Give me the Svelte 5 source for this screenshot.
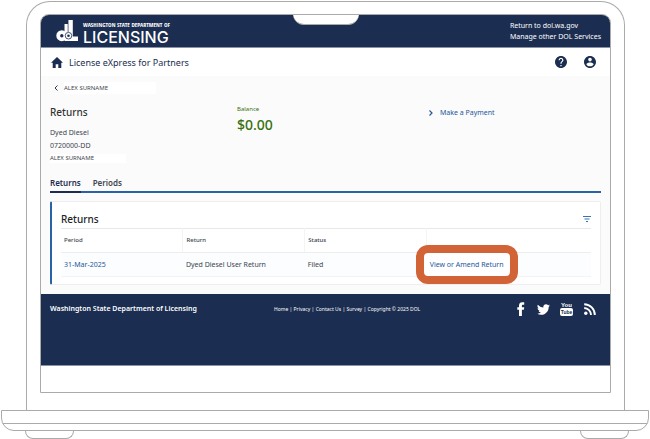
<script>
  const account = ['Dyed Diesel', '0720000-DD'];
  const rows = [{ period: '31-Mar-2025', name: 'Dyed Diesel User Return', status: 'Filed' }];
  const links = ['Home', 'Privacy', 'Contact Us', 'Survey'];
</script>

<div class="laptop">
  <div class="lid">
    <div class="screen">
      <div class="notch"></div>
      <header>
        <a class="brand" href="#home" aria-label="Washington State Department of Licensing">
          <svg width="23" height="22" viewBox="0 0 23 22" aria-hidden="true">
            <path fill="#fff" d="M8.500 4H12v17H8.500zM12 0h4.800v16.500H22V21H12z" />
            <circle cx="5.800" cy="15.700" r="3.600" fill="none" stroke="#fff" stroke-width="3.800" />
            <path d="M12.100 0v12" stroke="#1b2d50" stroke-width=".7" />
            <circle cx="12.500" cy="15.700" r="3.300" fill="#fff" stroke="#1b2d50" stroke-width=".8" />
            <circle cx="12.500" cy="15.700" r="1.300" fill="#1b2d50" />
          </svg>
          <span class="wordmark"><small>WASHINGTON STATE DEPARTMENT OF</small><b>LICENSING</b></span>
        </a>
        <nav class="top-links">
          <a href="#dol">Return to dol.wa.gov</a>
          <a href="#services">Manage other DOL Services</a>
        </nav>
      </header>

      <div class="appbar">
        <a class="home" href="#start">
          <svg width="12" height="11" viewBox="0 0 12 11" aria-hidden="true"><path fill="#1b2d50" d="M6 0 0 5.8h1.7V11h3V7.3h2.6V11h3V5.8H12z" /></svg>
          License eXpress for Partners
        </a>
        <div class="tools">
          <button aria-label="Help">
            <svg width="12" height="12" viewBox="2 2 20 20"><path fill="#1b2d50" d="M12 2C6.48 2 2 6.48 2 12s4.48 10 10 10 10-4.48 10-10S17.52 2 12 2zm1 17h-2v-2h2v2zm2.070-7.750-.9.920C13.450 12.900 13 13.500 13 15h-2v-.5c0-1.100.450-2.100 1.170-2.830l1.240-1.260c.370-.360.590-.860.590-1.410 0-1.100-.9-2-2-2s-2 .9-2 2H8c0-2.210 1.790-4 4-4s4 1.790 4 4c0 .880-.360 1.680-.930 2.250z" /></svg>
          </button>
          <button aria-label="Profile">
            <svg width="12" height="12" viewBox="2 2 20 20"><path fill="#1b2d50" d="M12 2C6.48 2 2 6.48 2 12s4.48 10 10 10 10-4.480 10-10S17.520 2 12 2zm0 3c1.660 0 3 1.340 3 3s-1.340 3-3 3-3-1.340-3-3 1.340-3 3-3zm0 14.200c-2.500 0-4.710-1.280-6-3.220.030-1.990 4-3.080 6-3.080 1.990 0 5.970 1.090 6 3.080-1.290 1.940-3.500 3.220-6 3.220z" /></svg>
          </button>
        </div>
      </div>

      <main>
        <a class="back" href="#account">
          <svg width="4" height="6" viewBox="0 0 4 6" aria-hidden="true"><path d="M3.500.5 1 3l2.500 2.500" fill="none" stroke="#333c4c" /></svg>
          <span class="name">ALEX SURNAME</span>
        </a>
        <section class="summary">
          <div class="account">
            <h1>Returns</h1>
            {#each account as line}<p>{line}</p>{/each}
            <p class="name small">ALEX SURNAME</p>
          </div>
          <div class="balance"><span>Balance</span><strong>$0.00</strong></div>
          <a class="pay" href="#pay">
            <svg width="4" height="6" viewBox="0 0 4 6" aria-hidden="true"><path d="M.5.5 3 3 .5 5.500" fill="none" stroke="#24589b" stroke-width="1.200" /></svg>
            Make a Payment
          </a>
        </section>
        <nav class="tabs">
          <a class="active" href="#returns">Returns</a>
          <a href="#periods">Periods</a>
        </nav>
        <section class="card">
          <div class="card-head">
            <h2>Returns</h2>
            <button aria-label="Filter">
              <svg width="8" height="6" viewBox="0 0 8 6"><path d="M0 .5h8M1.500 3h5M3 5.500h2" stroke="#3a72b0" stroke-width="1.200" /></svg>
            </button>
          </div>
          <table>
            <thead><tr><th>Period</th><th>Return</th><th>Status</th><th class="action" aria-label="Action"></th></tr></thead>
            <tbody>
              {#each rows as row}
                <tr>
                  <td><a href="#period">{row.period}</a></td>
                  <td>{row.name}</td>
                  <td>{row.status}</td>
                  <td><a class="highlight" href="#view">View or Amend Return</a></td>
                </tr>
              {/each}
            </tbody>
          </table>
        </section>
      </main>

      <footer>
        <strong>Washington State Department of Licensing</strong>
        <div class="legal">{#each links as link}<a href="#{link}">{link}</a>{' | '}{/each}Copyright © 2025 DOL</div>
        <div class="social">
          <a href="#facebook" aria-label="Facebook"><svg width="8" height="14" viewBox="0 0 8 14"><path fill="#fff" d="M2 14V7.800H.3V5.200H2V3.600C2 1.300 3.300.2 5.200.2h2v2.500H5.900c-.8 0-1 .4-1 1.100v1.400h2.300l-.3 2.600h-2V14z" /></svg></a>
          <a href="#twitter" aria-label="Twitter"><svg width="13" height="11" viewBox="0 2 24 20"><path fill="#fff" d="M23.950 4.570a10 10 0 0 1-2.820.770 4.960 4.960 0 0 0 2.160-2.720c-.950.550-2 .950-3.130 1.180a4.920 4.920 0 0 0-8.380 4.480C7.690 8.090 4.070 6.130 1.640 3.160a4.920 4.920 0 0 0 1.520 6.570 4.900 4.900 0 0 1-2.230-.610v.060a4.920 4.920 0 0 0 3.950 4.830 5 5 0 0 1-2.210.080 4.940 4.940 0 0 0 4.600 3.420A9.870 9.870 0 0 1 0 19.540a14 14 0 0 0 7.550 2.210c9.050 0 14-7.500 14-13.980l-.020-.630a9.900 9.900 0 0 0 2.420-2.570z" /></svg></a>
          <a class="youtube" href="#youtube" aria-label="YouTube"><span>You</span><span class="tube">Tube</span></a>
          <a href="#rss" aria-label="RSS"><svg width="12" height="12" viewBox="0 0 12 12"><circle cx="1.800" cy="10.200" r="1.700" fill="#fff" /><path d="M.2 5a7 7 0 0 1 6.800 7M.2 1.200A10.700 10.700 0 0 1 10.800 12" fill="none" stroke="#fff" stroke-width="1.900" /></svg></a>
        </div>
      </footer>
      <div class="blank"></div>
    </div>
  </div>
  <div class="base"></div>
  <div class="feet"><i></i><i></i></div>
</div>

<style>
  :global(body) { background: #fff; }
  * { box-sizing: border-box; }
  .laptop { padding: 1px 1px 0; overflow: hidden; font: 7px/13px "Noto Sans", "Open Sans", sans-serif; color: #40464f; }
  a { color: inherit; text-decoration: none; }
  button { display: flex; padding: 0; border: 0; background: none; }
  h1, h2, p { margin: 0; }
  svg { display: block; flex: none; }
  .lid { margin: 0 24px 0 25px; padding: 12px 13px 17px; border: 1px solid #aaa; border-bottom: 0; border-radius: 24px 24px 0 0; }
  .screen { position: relative; border: 1px solid #aaa; border-radius: 9px 9px 0 0; overflow: hidden; }
  .notch { position: absolute; top: -1px; left: 50%; width: 66px; height: 11px; margin-left: -33px; background: #fff; border-bottom: 1px solid #aaa; border-radius: 0 0 11px 11px; }
  header { display: flex; justify-content: space-between; height: 33px; padding: 5px 9px 0 15px; background: #1b2d50; color: #fff; border-bottom: 1px solid #8a93a5; }
  .brand { display: flex; gap: 4px; }
  .wordmark { display: flex; flex-direction: column; padding-top: 2px; }
  .wordmark small { font: bold 6px/7px "Liberation Sans Narrow", "Open Sans Condensed", "Liberation Sans", sans-serif; white-space: nowrap; }
  .wordmark b { font: 500 16px/16px Inter, sans-serif; }
  .top-links { display: flex; flex-direction: column; line-height: 11px; }
  .appbar { display: flex; justify-content: space-between; align-items: center; height: 28px; padding: 0 14px 0 10px; background: #fff; }
  .home { display: flex; align-items: center; gap: 6px; font-size: 9px; color: #1b2d50; }
  .tools { display: flex; gap: 17px; }
  main { padding: 6px 9px 9px; background: #fbfbfb; }
  .back { display: flex; align-items: center; gap: 6px; padding-left: 4px; font-size: 6px; line-height: 12px; }
  .name { width: 92px; background: #fff; }
  .name.small { width: 76px; font-size: 6px; line-height: 9px; margin-top: 2px; }
  .summary { display: grid; grid-template-columns: repeat(3, 1fr); gap: 10px; padding-top: 10px; }
  h1 { margin-bottom: 6px; font-size: 10px; line-height: 16px; font-weight: 500; color: #333; }
  .balance { display: flex; flex-direction: column; color: #38700f; font-size: 6px; line-height: 10px; }
  .balance strong { font-size: 14px; line-height: 22px; font-weight: 500; }
  .pay { display: flex; align-items: center; align-self: start; gap: 7px; padding-left: 5px; line-height: 18px; color: #24589b; }
  .tabs { display: flex; gap: 12px; margin-top: 12px; border-bottom: 2px solid #2a62a8; font-size: 8px; line-height: 15px; font-weight: 600; }
  .tabs a { margin-bottom: -2px; padding-bottom: 1px; border-bottom: 2px solid transparent; }
  .tabs .active { color: #1b2d50; border-color: #1b2d50; }
  .card { margin-top: 8px; padding: 9px 9px 7px; background: #fff; border: 1px solid #eee; border-left: 2px solid #2a62a8; border-radius: 2px; }
  .card-head { display: flex; justify-content: space-between; align-items: center; padding-bottom: 1px; }
  h2 { font-size: 10px; line-height: 16px; font-weight: 500; color: #222; }
  table { width: 100%; table-layout: fixed; border-collapse: collapse; border-top: 1px solid #e8e8e8; text-align: left; }
  th, td { height: 24px; padding: 0 3px; }
  th { border-bottom: 1px solid #eee; border-left: 1px solid #f4f4f4; font-size: 6px; font-weight: 500; }
  th:first-child { border-left: 0; }
  th.action { width: 31%; }
  td { background: #fbfdfe; border-bottom: 1px solid #f4f4f4; }
  td a { color: #24589b; }
  .highlight { position: relative; z-index: 1; }
  .highlight::before { content: ""; position: absolute; z-index: -1; inset: -15px -14px; border: 8px solid #d26336; border-radius: 12px; background: #fff; }
  footer { display: grid; grid-template-columns: 224px 1fr auto; align-items: start; height: 72px; padding: 7px 9px 0; background: #1b2d50; color: #fff; border-bottom: 1px solid #8a93a5; line-height: 16px; }
  footer strong { font-weight: 600; }
  .legal { font-size: 5px; }
  .social { display: grid; grid-template-columns: repeat(4, 23px); justify-items: center; align-items: center; height: 16px; }
  .youtube { font: bold 6px/6px "Liberation Sans Narrow", "Liberation Sans", sans-serif; text-align: center; }
  .youtube span { display: block; }
  .youtube .tube { padding: 1px; border-radius: 2px; background: #fff; color: #1b2d50; font-size: 5px; }
  .blank { height: 26px; background: #fff; }
  .base { height: 21px; border: 1px solid #aaa; border-radius: 0 0 13px 13px; background: linear-gradient(#aaa, #aaa) 0 12px / 100% 1px no-repeat; }
  .feet { display: flex; justify-content: space-between; padding: 0 20px 0 24px; }
  .feet i { width: 49px; height: 8px; border: 1px solid #aaa; border-top: 0; border-radius: 0 0 8px 8px; }
</style>
